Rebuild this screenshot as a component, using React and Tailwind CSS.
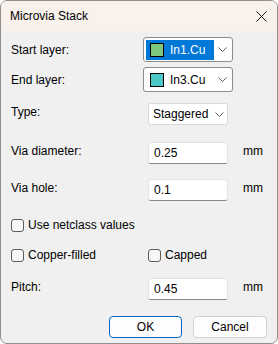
function Chevron() {
  return (
    <svg width="9" height="5" viewBox="0 0 9 5" className="shrink-0">
      <path d="M0.5 0.5 L4.5 4.5 L8.5 0.5" fill="none" stroke="#606060" strokeWidth="1" />
    </svg>
  );
}

function Swatch({ color }) {
  return <span className="w-[14px] h-[14px] border border-black shrink-0" style={{ backgroundColor: color }} />;
}

function LayerSelect({ color, label, active }) {
  return (
    <div className="w-[90px] h-[25px] bg-white border border-[#8c8c8c] rounded-[3px] flex items-center pl-[2px] pr-[4px]">
      <div className={`w-[68px] h-[20px] flex items-center gap-[6px] pl-[4px] ${active ? "bg-[#0078d7] text-white" : "text-black"}`}>
        <Swatch color={color} />
        <span>{label}</span>
      </div>
      <div className="flex-1 flex justify-end pr-[1px]">
        <Chevron />
      </div>
    </div>
  );
}

function TextInput({ value }) {
  return (
    <div className="w-[80px] h-[22px] bg-white border border-[#e3e3e3] border-b-[#8a8a8a] rounded-[3px] flex items-center pl-[5px]">
      {value}
    </div>
  );
}

function Checkbox({ label }) {
  return (
    <label className="flex items-center gap-[4px] h-[14px]">
      <span className="w-[13px] h-[13px] rounded-[3px] border border-[#5c5c5c] bg-[#f7f7f7]" />
      <span>{label}</span>
    </label>
  );
}

function FieldRow({ label, mt, children, unit }) {
  return (
    <div className={`flex items-start ${mt}`}>
      <div className="w-[137px] pt-[1px]">{label}</div>
      {children}
      {unit && <div className="ml-[15px] pt-[1px]">{unit}</div>}
    </div>
  );
}

export default function App() {
  return (
    <div
      className="w-[278px] h-[344px] bg-[#f0f0f0] border border-[#8f8f8f] rounded-[7px] overflow-hidden text-[12px] text-black leading-[16px]"
      style={{ fontFamily: '"Liberation Sans", Arial, sans-serif' }}
    >
      {/* TITLE BAR */}
      <div className="h-[30px] bg-[#f8f1ec] flex items-center justify-between pl-[9px] pr-[10px]">
        <span className="text-[12px]">Microvia Stack</span>
        <svg width="11" height="11" viewBox="0 0 11 11">
          <path d="M0.5 0.5 L10.5 10.5 M10.5 0.5 L0.5 10.5" stroke="#1a1a1a" strokeWidth="1" />
        </svg>
      </div>

      {/* BODY */}
      <div className="pl-[10px] flex flex-col">
        <div className="flex items-center mt-[6px]">
          <div className="w-[132px]">Start layer:</div>
          <LayerSelect color="#7fc97f" label="In1.Cu" active />
        </div>
        <div className="flex items-center mt-[5px]">
          <div className="w-[132px]">End layer:</div>
          <LayerSelect color="#4dc8c8" label="In3.Cu" />
        </div>

        <FieldRow label="Type:" mt="mt-[11px]">
          <div className="w-[80px] h-[22px] bg-white border border-[#d9d9d9] rounded-[3px] flex items-center justify-between pl-[4px] pr-[3px]">
            <span>Staggered</span>
            <Chevron />
          </div>
        </FieldRow>

        <FieldRow label="Via diameter:" mt="mt-[17px]" unit="mm">
          <TextInput value="0.25" />
        </FieldRow>

        <FieldRow label="Via hole:" mt="mt-[15px]" unit="mm">
          <TextInput value="0.1" />
        </FieldRow>

        <div className="mt-[17px]">
          <Checkbox label="Use netclass values" />
        </div>

        <div className="flex mt-[16px]">
          <div className="w-[137px]">
            <Checkbox label="Copper-filled" />
          </div>
          <Checkbox label="Capped" />
        </div>

        <FieldRow label="Pitch:" mt="mt-[16px]" unit="mm">
          <TextInput value="0.45" />
        </FieldRow>

        {/* BUTTONS */}
        <div className="flex justify-end gap-[11px] mt-[16px] pr-[10px]">
          <button className="w-[73px] h-[22px] bg-[#fdfdfd] border border-[#0067c0] rounded-[4px]">OK</button>
          <button className="w-[74px] h-[22px] bg-[#fdfdfd] border border-[#d0d0d0] rounded-[4px]">Cancel</button>
        </div>
      </div>
    </div>
  );
}
